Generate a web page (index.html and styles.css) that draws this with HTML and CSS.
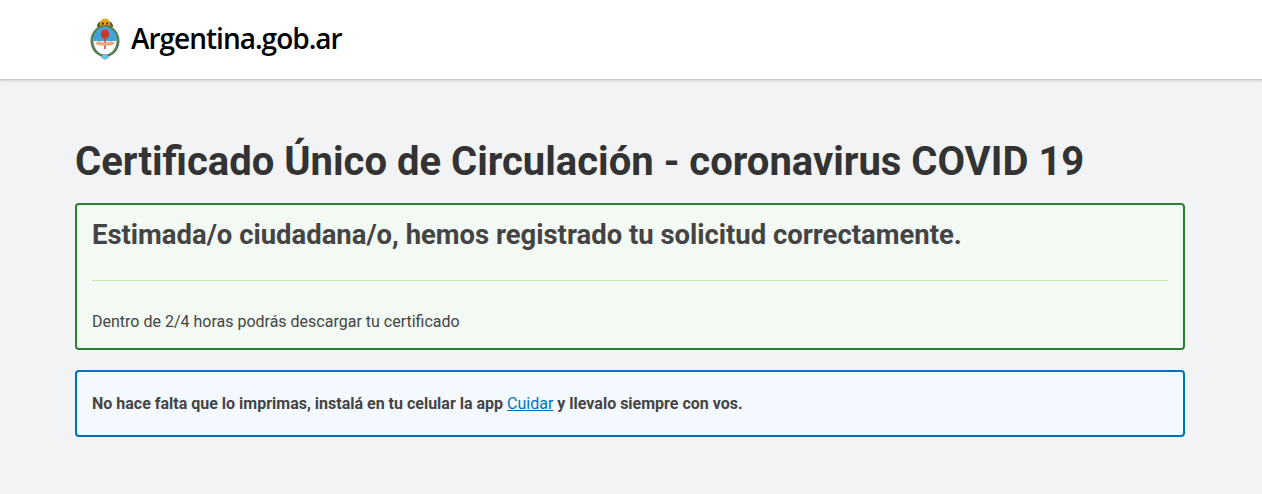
FILE: index.html
```html
<!DOCTYPE html>
<html lang="es">
<head>
    <meta charset="UTF-8">
    <title>Certificado Único de Circulación</title>
    <link rel="stylesheet" href="styles.css">
</head>
<body>
    <header class="navbar">
        <a class="brand" href="#">
            <svg class="escudo" viewBox="0 0 30 44" width="30" height="44" aria-hidden="true">
                <!-- sol -->
                <path d="M7 11 C6 2 24 2 23 11 Z" fill="#6b5a35"/>
                <circle cx="15" cy="7.5" r="5" fill="#e9a820"/>
                <circle cx="12.8" cy="7.5" r="1.2" fill="#4a3a18"/>
                <circle cx="17.2" cy="7.5" r="1.2" fill="#4a3a18"/>
                <!-- laureles y ovalo -->
                <ellipse cx="15" cy="25" rx="14.5" ry="16" fill="#55805a"/>
                <ellipse cx="15" cy="25" rx="11.5" ry="13.5" fill="#fff"/>
                <path d="M3.5 25 C3.5 16 8 11.5 15 11.5 C22 11.5 26.5 16 26.5 25 Z" fill="#3fa3dd"/>
                <!-- gorro y pica -->
                <path d="M15 13.5 C11.5 13.5 10.5 17 11.2 19 C10.8 21.5 13 22.5 14.3 22.5 L14.3 33 L15.7 33 L15.7 22.5 C17 22.5 19.2 21.5 18.8 19 C19.5 17 18.5 13.5 15 13.5 Z" fill="#c93a28"/>
                <!-- manos -->
                <path d="M5 27 C8 24 12 25.5 15 27 C18 25.5 22 24 25 27 C22 30.5 18 29.5 15 29.5 C12 29.5 8 30.5 5 27 Z" fill="#e6ae80"/>
                <!-- cinta -->
                <path d="M10 41 L15 38 L20 41 L15 44 Z" fill="#6fc0e8"/>
            </svg>
            <span class="brand-name">Argentina.gob.ar</span>
        </a>
    </header>

    <main class="container">
        <h1>Certificado Único de Circulación - coronavirus COVID 19</h1>

        <div class="alert alert-success">
            <h2>Estimada/o ciudadana/o, hemos registrado tu solicitud correctamente.</h2>
            <hr>
            <p>Dentro de 2/4 horas podrás descargar tu certificado</p>
        </div>

        <div class="alert alert-info">
            <p>No hace falta que lo imprimas, instalá en tu celular la app <a href="#">Cuidar</a> y llevalo siempre con vos.</p>
        </div>
    </main>
</body>
</html>
```

FILE: styles.css
```css
html, body {
    height: 100%;
}

body {
    margin: 0;
    background-color: #f2f3f5;
    color: #333;
    font-family: Roboto, "Liberation Sans", sans-serif;
    font-size: 16px;
    overflow: hidden;
}

.navbar {
    box-sizing: border-box;
    height: 80px;
    padding: 16px 0 0 90px;
    background-color: white;
    border-bottom: 1px solid #ccc;
    box-shadow: 0 1px 2px rgba(0, 0, 0, 0.15);
}

.brand {
    display: flex;
    align-items: center;
    gap: 11px;
    color: #000;
    text-decoration: none;
}

.brand-name {
    font-family: "Open Sans", sans-serif;
    font-size: 28px;
    font-weight: 600;
    letter-spacing: -1px;
    line-height: 44px;
}

.container {
    width: 1110px;
    margin-left: 75px;
    padding-top: 56px;
}

h1 {
    margin: 0 0 16px;
    color: #333;
    font-size: 40px;
    font-weight: 700;
    line-height: 51px;
}

.alert {
    box-sizing: border-box;
    margin-bottom: 20px;
    padding: 15px;
    border: 2px solid;
    border-radius: 4px;
    color: #444;
}

.alert-success {
    height: 147px;
    background-color: #f3f9f3;
    border-color: #2e7d33;
}

.alert-info {
    height: 67px;
    padding-top: 22px;
    background-color: #f3f9ff;
    border-color: #0072bb;
    font-weight: 700;
}

.alert h2 {
    margin: 0;
    font-size: 27.44px;
    font-weight: 700;
    line-height: 30px;
}

.alert hr {
    margin: 30px 0 31px;
    border: 0;
    border-top: 1px solid #c5e4b8;
}

.alert p {
    margin: 0;
    line-height: 20px;
}

.alert a {
    color: #0072bb;
    font-weight: 400;
}
```
